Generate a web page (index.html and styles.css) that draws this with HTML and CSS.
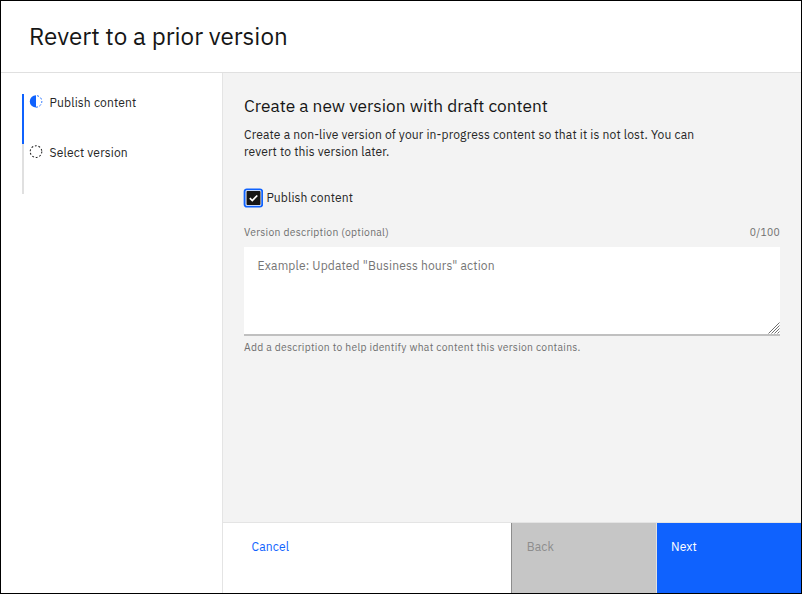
FILE: index.html
```html
<!DOCTYPE html>
<html lang="en">
<head>
<meta charset="utf-8">
<title>Revert to a prior version</title>
<link rel="stylesheet" href="styles.css">
</head>
<body>
<div class="modal">
  <header class="header"><h1>Revert to a prior version</h1></header>
  <div class="body">
    <nav class="sidebar">
      <ol class="steps">
        <li class="step current">
          <svg class="step-icon" viewBox="0 0 14 14"><path d="M7 1.2a6.2 6.2 0 0 0 0 12.4z" fill="#0f62fe"/><path d="M7 1.6a5.8 5.8 0 0 1 0 11.6" fill="none" stroke="#0f62fe" stroke-width="1" stroke-dasharray="1.9 1.75" stroke-dashoffset="-1.2"/></svg>
          <span>Publish content</span>
        </li>
        <li class="step">
          <svg class="step-icon" viewBox="0 0 14 14"><circle cx="7" cy="7.6" r="5.8" fill="none" stroke="#262626" stroke-width="1.05" stroke-dasharray="1.85 1.794"/></svg>
          <span>Select version</span>
        </li>
      </ol>
    </nav>
    <section class="main">
      <div class="content">
        <h2>Create a new version with draft content</h2>
        <p class="intro">Create a non-live version of your in-progress content so that it is not lost. You can<br>revert to this version later.</p>
        <div class="check-row">
          <svg class="checkbox" viewBox="0 0 20 20"><rect x="1.6" y="1.4" width="17.6" height="17.2" rx="2.2" fill="#fff" stroke="#0f62fe" stroke-width="1.9"/><rect x="3.5" y="3" width="14" height="14" rx=".8" fill="#161616"/><path d="M6.8 10.1l2.5 2.4 5-5" fill="none" stroke="#fff" stroke-width="1.7"/></svg>
          <span class="check-label">Publish content</span>
        </div>
        <div class="field-head"><span>Version description (optional)</span><span>0/100</span></div>
        <div class="textarea">
          <span>Example: Updated "Business hours" action</span>
          <svg class="grip" viewBox="0 0 12 12"><path d="M.5 11.5l11-11M3.5 11.5l8-8M6.5 11.5l5-5M9.5 11.5l2-2" stroke="#6f6f6f" stroke-width="1"/></svg>
        </div>
        <p class="helper">Add a description to help identify what content this version contains.</p>
      </div>
      <footer class="footer">
        <div class="btn cancel">Cancel</div>
        <div class="btn back">Back</div>
        <div class="btn next">Next</div>
      </footer>
    </section>
  </div>
</div>
</body>
</html>
```
FILE: styles.css
```css
* { box-sizing: border-box; }
body { margin: 0; font-family: "IBM Plex Sans", Roboto, sans-serif; font-size: 12.08px; letter-spacing: .14px; color: #262626; }
h1, h2, p, ol { margin: 0; padding: 0; font-weight: 400; letter-spacing: 0; }
.modal { width: 802px; height: 594px; border: 1px solid #000; background: #fff; display: flex; flex-direction: column; }
.header { height: 72px; border-bottom: 1px solid #e0e0e0; padding: 19px 28px 0; }
h1 { font-size: 24.2px; line-height: 32px; color: #161616; white-space: nowrap; }
.body { flex: 1; display: flex; min-height: 0; }
.sidebar { width: 222px; border-right: 1px solid #e4e4e4; padding: 21px 0 0 21px; }
.steps { list-style: none; letter-spacing: .15px; }
.step { height: 50px; border-left: 2px solid #e0e0e0; display: flex; align-items: flex-start; padding-left: 5px; line-height: 17px; }
.current { border-color: #0f62fe; }
.step-icon { width: 14px; height: 14px; margin: 0 6.6px 0 0; }
.main { flex: 1; display: flex; flex-direction: column; background: #f3f3f3; }
.content { flex: 1; padding: 20px 21px 0; white-space: nowrap; }
h2 { font-size: 17.3px; line-height: 25px; color: #161616; }
.intro { margin-top: 7.5px; line-height: 17.3px; letter-spacing: .145px; }
.check-row { display: flex; align-items: center; height: 20px; margin: 27.5px 0 0 -1px; }
.checkbox { width: 20px; height: 20px; margin-right: 3.4px; }
.field-head { display: flex; justify-content: space-between; margin-top: 16px; height: 23px; line-height: 16px; font-size: 10.35px; color: #6f6f6f; letter-spacing: .276px; }
.textarea { position: relative; height: 89px; background: #fff; border-bottom: 2px solid #c0c0c0; padding: 10px 13.6px; line-height: 17px; color: #757575; }
.grip { position: absolute; right: 0; bottom: 0; width: 12px; height: 12px; }
.helper { margin-top: 3px; font-size: 10.35px; line-height: 16px; color: #6f6f6f; letter-spacing: .28px; }
.footer { display: flex; height: 71px; border-top: 1px solid #e4e4e4; background: #fff; }
.btn { padding: 15px 14px; line-height: 17px; }
.cancel { width: 288px; padding-left: 28.6px; color: #0f62fe; }
.back { width: 145px; background: #c6c6c6; border-left: 1px solid #8d8d8d; padding-left: 14.7px; color: #8d8d8d; }
.next { flex: 1; background: #0f62fe; border-left: 1px solid #e0e0e0; color: #fff; }
```
